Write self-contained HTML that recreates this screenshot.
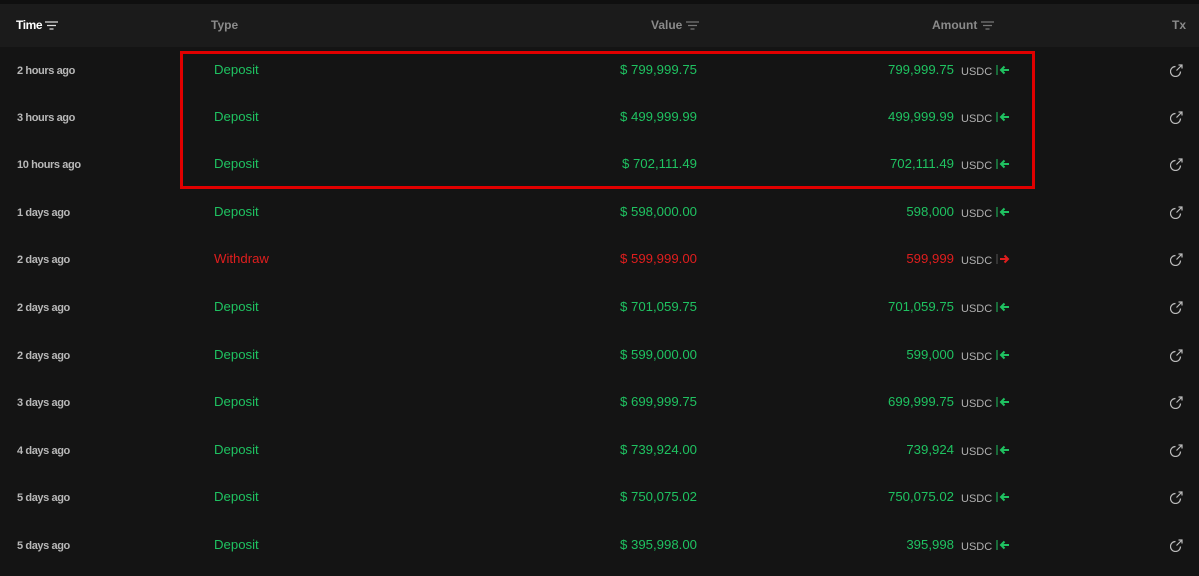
<!DOCTYPE html>
<html><head><meta charset="utf-8"><style>
*{margin:0;padding:0;box-sizing:border-box}
body{width:1199px;height:576px;background:#141414;font-family:"Liberation Sans",Arial,sans-serif;position:relative;overflow:hidden}
.hdr{position:absolute;left:0;top:4px;width:1199px;height:43px;background:#1b1b1b}
.top{position:absolute;left:0;top:0;width:1199px;height:4px;background:#0f0f0f}
.t{position:absolute;font-size:12px;font-weight:bold;white-space:nowrap;line-height:14px}
.h{color:#8a8a8a;font-size:12px;font-weight:bold}
.g{color:#1fc261;font-size:13.2px;font-weight:normal}
.r{color:#e01e1e;font-size:13.2px;font-weight:normal}
.time{color:#b8b8b8;font-size:11px;letter-spacing:-0.4px}
.u{color:#b0b0b0;font-size:11px;font-weight:normal}
.box{position:absolute;left:180px;top:51px;width:855px;height:138px;border:3px solid #e00000}
</style></head><body>
<div class="top"></div><div class="hdr"></div>
<div class="t" style="left:16px;top:18px;color:#fff;letter-spacing:-0.4px">Time <svg width="13" height="9" style="vertical-align:middle"><path d="M0 1h13M2 4.5h9M4.5 8h4" stroke="#ddd" stroke-width="1.2"/></svg></div>
<div class="t h" style="left:211px;top:18px">Type</div>
<div class="t h" style="left:651px;top:18px">Value <svg width="13" height="9" style="vertical-align:middle"><path d="M0 1h13M2 4.5h9M4.5 8h4" stroke="#777" stroke-width="1.2"/></svg></div>
<div class="t h" style="left:932px;top:18px">Amount <svg width="13" height="9" style="vertical-align:middle"><path d="M0 1h13M2 4.5h9M4.5 8h4" stroke="#777" stroke-width="1.2"/></svg></div>
<div class="t h" style="left:1172px;top:18px">Tx</div>
<div id="rows"></div>
<div class="box"></div>
<script>
var d=[["2 hours ago","799,999.75","799,999.75",0],["3 hours ago","499,999.99","499,999.99",0],["10 hours ago","702,111.49","702,111.49",0],["1 days ago","598,000.00","598,000",0],["2 days ago","599,999.00","599,999",1],["2 days ago","701,059.75","701,059.75",0],["2 days ago","599,000.00","599,000",0],["3 days ago","699,999.75","699,999.75",0],["4 days ago","739,924.00","739,924",0],["5 days ago","750,075.02","750,075.02",0],["5 days ago","395,998.00","395,998",0]];
var ys=[70,117,164,212,259,307,355,402,450,497,545],h="";
d.forEach(function(r,i){var y=ys[i]-7,c=r[3]?"r":"g",col=r[3]?"#e01e1e":"#1fc261";
h+='<div class="t time" style="left:17px;top:'+(y+1)+'px">'+r[0]+'</div>';
h+='<div class="t '+c+'" style="left:214px;top:'+y+'px">'+(r[3]?"Withdraw":"Deposit")+'</div>';
h+='<div class="t '+c+'" style="right:502px;top:'+y+'px">$ '+r[1]+'</div>';
h+='<div class="t '+c+'" style="right:245px;top:'+y+'px">'+r[2]+'</div>';
h+='<div class="t u" style="left:961px;top:'+(y+2)+'px">USDC</div>';
h+='<svg style="position:absolute;left:996px;top:'+(y+1)+'px" width="14" height="12">'+(r[3]?'<path d="M1 1v10" stroke="#555" stroke-width="1"/><path d="M4 6h8M8.5 2.5L12 6l-3.5 3.5" stroke="'+col+'" stroke-width="2" fill="none"/>':'<path d="M1 1v10" stroke="'+col+'" stroke-width="1"/><path d="M13 6H5M8.5 2.5L5 6l3.5 3.5" stroke="'+col+'" stroke-width="2" fill="none"/>')+'</svg>';
h+='<svg style="position:absolute;left:1170px;top:'+(y+1)+'px" width="13" height="13"><path d="M10.5 7.5A5 5 0 1 1 5.5 2.5" stroke="#bbb" stroke-width="1.2" fill="none"/><path d="M6.5 6.5L12 1M8.5 1H12V4.5" stroke="#bbb" stroke-width="1.2" fill="none"/></svg>';});
document.getElementById("rows").innerHTML=h;
</script>
</body></html>
